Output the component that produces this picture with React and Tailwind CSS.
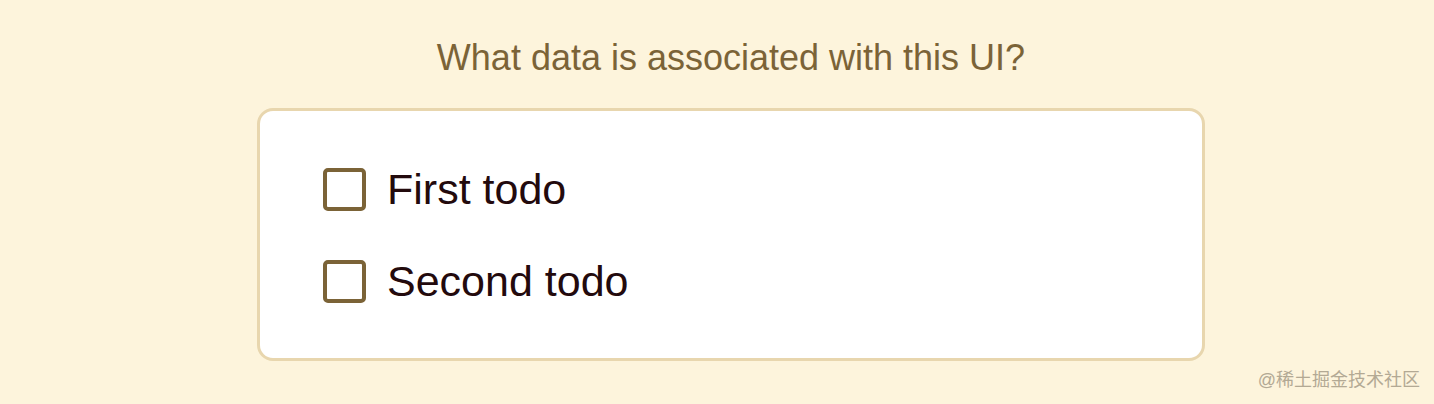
import { useState } from "react";

const todos = [
  { id: 1, title: "First todo", done: false },
  { id: 2, title: "Second todo", done: false },
];

const App = () => {
  const [items, setItems] = useState(todos);

  const toggle = (id) => {
    setItems((prev) => prev.map((t) => (t.id === id ? { ...t, done: !t.done } : t)));
  };

  return (
    <div className="relative w-full h-[404px] bg-[#fdf4dc] pl-[28px] flex flex-col items-center font-['Liberation_Sans',Arial,sans-serif]">
      <h2 className="mt-[36px] text-[36px] leading-[44px] text-[#7b6337]">What data is associated with this UI?</h2>

      <div className="mt-[28px] w-[948px] h-[253px] bg-white border-[3px] border-[#e8d6ae] rounded-[16px] pl-[63px] pt-[57px] flex flex-col gap-[49px]">
        {items.map((todo) => (
          <label key={todo.id} className="flex items-center gap-[21px] cursor-pointer">
            <button
              onClick={() => toggle(todo.id)}
              className="w-[43px] h-[43px] border-[4px] border-[#7b6337] rounded-[5px] bg-white flex items-center justify-center"
            >
              {todo.done && <span className="w-[20px] h-[20px] bg-[#7b6337]" />}
            </button>
            <span className="text-[43px] leading-[43px] text-[#230a0d]">{todo.title}</span>
          </label>
        ))}
      </div>

      <div className="absolute right-[14px] bottom-[13px] text-[18px] leading-[22px] text-[#b3a994] font-['Liberation_Sans','Noto_Sans_CJK_SC',sans-serif]">
        @稀土掘金技术社区
      </div>
    </div>
  );
};

export default App;
